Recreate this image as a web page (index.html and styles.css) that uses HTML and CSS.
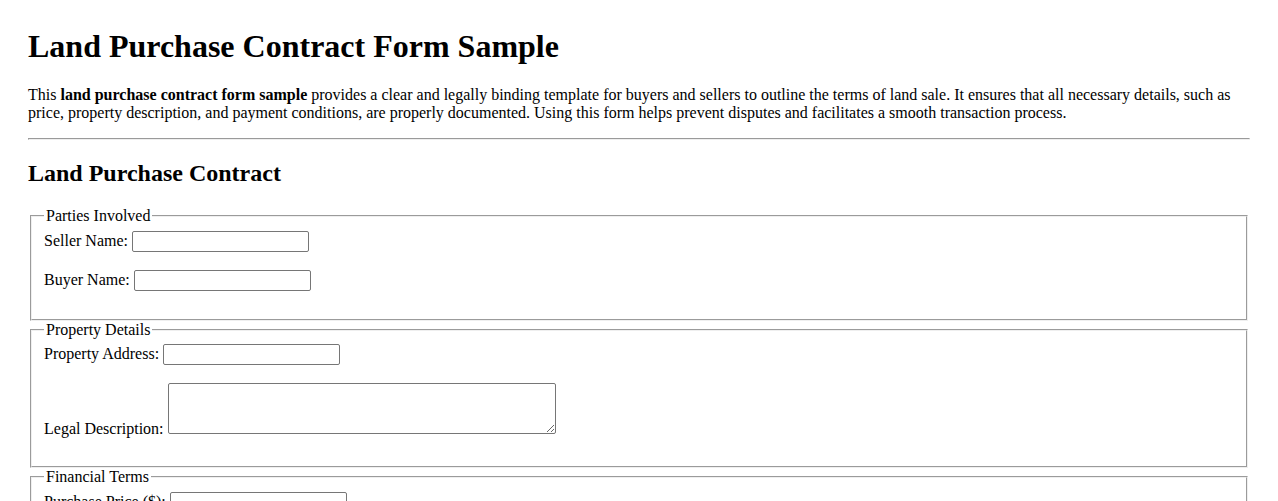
FILE: index.html
```html
<!DOCTYPE html>
<html lang="en">
<head>
<meta charset="utf-8">
<title>Land Purchase Contract Form Sample</title>
<link rel="stylesheet" href="styles.css">
</head>
<body>
<h1 class="title">Land Purchase Contract Form Sample</h1>
<p class="intro">This <strong>land purchase contract form sample</strong> provides a clear and legally binding template for buyers and sellers to outline the terms of land sale. It ensures that all necessary details, such as price, property description, and payment conditions, are properly documented. Using this form helps prevent disputes and facilitates a smooth transaction process.</p>
<hr class="rule">
<h2 class="subtitle">Land Purchase Contract</h2>
<form class="contract">
  <fieldset class="group">
    <legend>Parties Involved</legend>
    <label for="seller">Seller Name:</label> <input class="field" type="text" id="seller"><br><br>
    <label for="buyer">Buyer Name:</label> <input class="field" type="text" id="buyer"><br><br>
  </fieldset>
  <fieldset class="group">
    <legend>Property Details</legend>
    <label for="address">Property Address:</label> <input class="field" type="text" id="address"><br><br>
    <label for="legal">Legal Description:</label> <textarea class="area" id="legal"></textarea><br><br>
  </fieldset>
  <fieldset class="group">
    <legend>Financial Terms</legend>
    <label for="price">Purchase Price ($):</label> <input class="field" type="text" id="price"><br><br>
    <label for="deposit">Deposit Amount ($):</label> <input class="field" type="text" id="deposit"><br><br>
  </fieldset>
</form>
</body>
</html>
```
FILE: styles.css
```css
body {
  margin: 0;
  padding: 28px;
  font-family: "Liberation Serif", "Times New Roman", serif;
  font-size: 16px;
  color: #000;
  background: #fff;
}
.title {
  font-size: 32px;
  margin: 0 0 21.44px;
}
.intro {
  margin: 16px 0;
}
.rule {
  margin: 8px 0;
}
.subtitle {
  font-size: 24px;
  margin: 19.92px 0;
}
.contract {
  margin: 0;
}
.group {
  margin: 0 2px;
}
.field {
  box-sizing: border-box;
  width: 177px;
  height: 21px;
  padding: 1px 2px;
  border: 1px solid #767676;
  border-radius: 2px;
  font-family: "Liberation Sans", Arial, sans-serif;
  font-size: 13.33px;
}
.area {
  box-sizing: border-box;
  width: 388px;
  height: 51px;
  padding: 2px;
  border: 1px solid #767676;
  border-radius: 2px;
  font-family: "Liberation Mono", monospace;
  font-size: 13.33px;
}
```
